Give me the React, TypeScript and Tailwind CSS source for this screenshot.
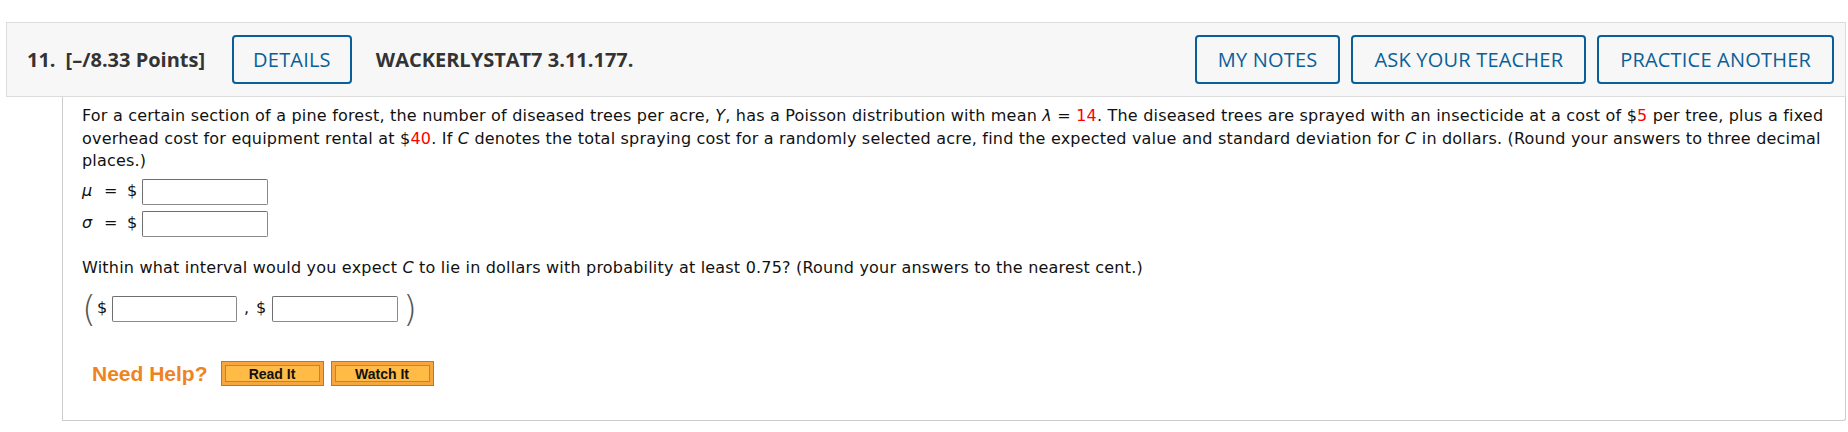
import React from 'react'

// header buttons share one look
const OutlineButton = ({ label, pad = 'px-[21px]' }: { label: string; pad?: string }) => (
  <button
    className={`flex h-[49px] items-center rounded-[4px] border-2 border-[#0b5f98] bg-transparent ${pad} text-[20px] leading-none tracking-[0.2px] text-[#0b5f98]`}
  >
    {label}
  </button>
)

// little orange help buttons
const HelpButton = ({ label }: { label: string }) => (
  <button className="h-[25px] w-[103px] border border-[#b97634] bg-[#f6a53f] p-[3px]">
    <span className="flex h-full w-full items-center justify-center border border-[#c58232] bg-[#ffbb45] font-['Liberation_Sans',Arial,sans-serif] text-[14px] font-bold leading-none text-[#111111]">
      {label}
    </span>
  </button>
)

const AnswerBox = ({ w = 'w-[126px]' }: { w?: string }) => (
  <span
    className={`inline-block h-[26px] ${w} rounded-[2px] border border-[#8a8a8a] border-t-[#6f6f6f] border-l-[#6f6f6f] bg-white align-middle`}
  />
)

const Red = ({ children }: { children: React.ReactNode }) => (
  <span className="text-[#ff0000]">{children}</span>
)

export default function App() {
  return (
    <div className="h-[432px] w-[1848px] bg-white pt-[22px]">
      {/* question header */}
      <div className="ml-[6px] flex h-[75px] w-[1840px] items-center border border-[#dcdcdc] bg-[#f7f7f7] pl-5 pr-[11px] font-['Open_Sans',sans-serif] text-[20px] text-[#333333]">
        <span className="font-bold">11.</span>
        <span className="ml-[10px] font-bold">[–/8.33 Points]</span>
        <div className="ml-[27px]">
          <OutlineButton label="DETAILS" pad="px-[19px]" />
        </div>
        <span className="ml-[24px] font-bold">WACKERLYSTAT7 3.11.177.</span>
        <div className="ml-auto flex gap-[11px]">
          <OutlineButton label="MY NOTES" />
          <OutlineButton label="ASK YOUR TEACHER" />
          <OutlineButton label="PRACTICE ANOTHER" />
        </div>
      </div>

      {/* question body */}
      <div className="ml-[62px] h-[324px] w-[1784px] rounded-br-[3px] border-x border-b border-[#cccccc] pl-[19px] pr-4 pt-[8px] font-['DejaVu_Sans',Verdana,sans-serif] text-[16px] leading-[22.5px] tracking-[0.2px] text-[#111111]">
        <p>
          For a certain section of a pine forest, the number of diseased trees per acre, <i>Y</i>, has a
          Poisson distribution with mean <i>λ</i> = <Red>14</Red>. The diseased trees are sprayed with an
          insecticide at a cost of $<Red>5</Red> per tree, plus a fixed overhead cost for equipment rental
          at $<Red>40</Red>. If <i>C</i> denotes the total spraying cost for a randomly selected acre, find
          the expected value and standard deviation for <i>C</i> in dollars. (Round your answers to three
          decimal places.)
        </p>

        <div className="mt-[6px] flex flex-col gap-[6px]">
          <div className="flex h-[26px] items-center">
            <i className="w-[22px]">μ</i>
            <span className="w-[23px]">=</span>
            <span className="w-[15px]">$</span>
            <AnswerBox />
          </div>
          <div className="flex h-[26px] items-center">
            <i className="w-[22px]">σ</i>
            <span className="w-[23px]">=</span>
            <span className="w-[15px]">$</span>
            <AnswerBox />
          </div>
        </div>

        <p className="mt-[20px]">
          Within what interval would you expect <i>C</i> to lie in dollars with probability at least 0.75?
          (Round your answers to the nearest cent.)
        </p>

        <div className="mt-[12px] flex h-[35px] items-center">
          <span className="font-['DejaVu_Sans',sans-serif] text-[36px] font-extralight leading-none tracking-normal text-[#555555]">(</span>
          <span className="ml-[1px] w-[15px]">$</span>
          <AnswerBox w="w-[125px]" />
          <span className="ml-[7px] w-[12px]">,</span>
          <span className="w-[16px]">$</span>
          <AnswerBox w="w-[126px]" />
          <span className="ml-[5px] font-['DejaVu_Sans',sans-serif] text-[36px] font-extralight leading-none tracking-normal text-[#555555]">)</span>
        </div>

        <div className="ml-[10px] mt-[35px] flex items-center tracking-normal">
          <span className="font-['Liberation_Sans',Arial,sans-serif] text-[21px] font-bold leading-none text-[#ee8421]">
            Need Help?
          </span>
          <div className="ml-[13px] flex gap-[7px]">
            <HelpButton label="Read It" />
            <HelpButton label="Watch It" />
          </div>
        </div>
      </div>
    </div>
  )
}
